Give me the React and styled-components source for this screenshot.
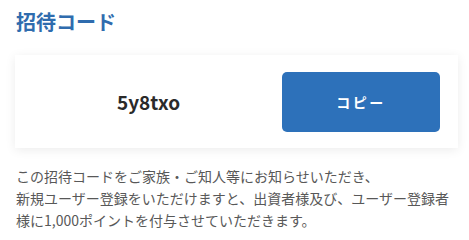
import React from "react";
import styled, { createGlobalStyle } from "styled-components";

const Global = createGlobalStyle`
  html, body { margin: 0; padding: 0; background: #fff; }
  body { font-family: "Noto Sans CJK JP", "Noto Sans", sans-serif; }
`;

const Page = styled.div`
  width: 443px;
  padding: 7px 0 0 15px;
`;

const Title = styled.h2`
  margin: 0 0 18px 1px;
  font-size: 20px;
  line-height: 30px;
  font-weight: 700;
  color: #2f6cae;
`;

const Card = styled.div`
  display: flex;
  align-items: center;
  height: 93px;
  box-sizing: border-box;
  padding: 0 18px 0 0;
  background: #fff;
  box-shadow: 0 2px 10px rgba(0, 0, 0, 0.08);
`;

const Code = styled.div`
  flex: 1;
  text-align: center;
  font-size: 19px;
  font-weight: 700;
  color: #2a2a2a;
`;

const CopyButton = styled.button`
  width: 158px;
  height: 60px;
  border: none;
  border-radius: 5px;
  background: #2d71ba;
  color: #fff;
  font-family: inherit;
  font-size: 14px;
  font-weight: 700;
  letter-spacing: 2.5px;
  cursor: pointer;
`;

const Note = styled.p`
  margin: 17px 0 0 1px;
  font-size: 14px;
  line-height: 22px;
  color: #585858;
`;

export default function App() {
  return (
    <>
      <Global />
      <Page>
        <Title>招待コード</Title>
        <Card>
          <Code>5y8txo</Code>
          <CopyButton>コピー</CopyButton>
        </Card>
        <Note>
          この招待コードをご家族・ご知人等にお知らせいただき、
          <br />
          新規ユーザー登録をいただけますと、出資者様及び、ユーザー登録者様に1,000ポイントを付与させていただきます。
        </Note>
      </Page>
    </>
  );
}
